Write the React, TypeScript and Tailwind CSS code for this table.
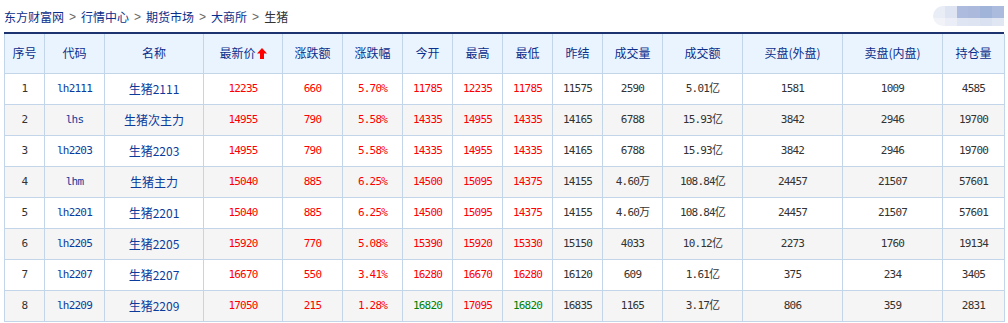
import { Fragment } from 'react';

type Row = [string, string, string, number, string, string, number, number, number, number, string, string, string, string, string];

const rows: Row[] = [
  ['1', 'lh2111', '生猪2111', 12235, '660', '5.70%', 11785, 12235, 11785, 11575, '2590', '5.01亿', '1581', '1009', '4585'],
  ['2', 'lhs', '生猪次主力', 14955, '790', '5.58%', 14335, 14955, 14335, 14165, '6788', '15.93亿', '3842', '2946', '19700'],
  ['3', 'lh2203', '生猪2203', 14955, '790', '5.58%', 14335, 14955, 14335, 14165, '6788', '15.93亿', '3842', '2946', '19700'],
  ['4', 'lhm', '生猪主力', 15040, '885', '6.25%', 14500, 15095, 14375, 14155, '4.60万', '108.84亿', '24457', '21507', '57601'],
  ['5', 'lh2201', '生猪2201', 15040, '885', '6.25%', 14500, 15095, 14375, 14155, '4.60万', '108.84亿', '24457', '21507', '57601'],
  ['6', 'lh2205', '生猪2205', 15920, '770', '5.08%', 15390, 15920, 15330, 15150, '4033', '10.12亿', '2273', '1760', '19134'],
  ['7', 'lh2207', '生猪2207', 16670, '550', '3.41%', 16280, 16670, 16280, 16120, '609', '1.61亿', '375', '234', '3405'],
  ['8', 'lh2209', '生猪2209', 17050, '215', '1.28%', 16820, 17095, 16820, 16835, '1165', '3.17亿', '806', '359', '2831'],
];

const headers = ['序号', '代码', '名称', '最新价', '涨跌额', '涨跌幅', '今开', '最高', '最低', '昨结', '成交量', '成交额', '买盘(外盘)', '卖盘(内盘)', '持仓量'];
const widths = ['w-[40px]', 'w-[60px]', 'w-[99px]', 'w-[79px]', 'w-[60px]', 'w-[60px]', 'w-[50px]', 'w-[50px]', 'w-[50px]', 'w-[50px]', 'w-[60px]', 'w-[80px]', 'w-[100px]', 'w-[100px]', 'w-[62px]'];

const crumbs = ['东方财富网', '行情中心', '期货市场', '大商所'];

const mono = "font-['DejaVu_Sans_Mono','Noto_Sans_CJK_SC',monospace] text-[11px] tracking-[-0.8px]";

function priceColor(v: number, prev: number) {
  if (v > prev) return 'text-[#ff0000]';
  if (v < prev) return 'text-[#008000]';
  return 'text-[#333333]';
}

function UpArrow() {
  return (
    <svg width="10" height="11" viewBox="0 0 10 11" className="inline-block ml-[1px] -mt-[2px] align-middle">
      <path d="M5 0 L10 5.5 L7 5.5 L7 11 L3 11 L3 5.5 L0 5.5 Z" fill="#ff0000" />
    </svg>
  );
}

function BlurBox() {
  const top = ['bg-[#e9edf6]', 'bg-[#dee4f2]', 'bg-[#acbbde]', 'bg-[#abbadc]', 'bg-[#a0b3d8]', 'bg-[#abbbdd]'];
  const bottom = ['bg-[#f1f3f9]', 'bg-[#ebeef7]', 'bg-[#dfe5f2]', 'bg-[#dee4f1]', 'bg-[#dae1f0]', 'bg-[#e0e6f2]'];
  return (
    <div className="w-[71px] h-[20px] rounded-l-[10px] overflow-hidden grid grid-cols-6 grid-rows-[12px_8px]">
      {top.map((c, i) => <div key={'t' + i} className={c} />)}
      {bottom.map((c, i) => <div key={'b' + i} className={c} />)}
    </div>
  );
}

export default function App() {
  return (
    <div className="w-[1008px] h-[323px] bg-white overflow-hidden font-['Noto_Sans_CJK_SC',sans-serif]">
      <div className="h-[32px] pl-[4px] pr-[4px] flex items-center justify-between">
        <div className="flex items-center text-[12px] leading-none pt-[2px]">
          {crumbs.map((c) => (
            <Fragment key={c}>
              <span className="text-[#0a2f8c]">{c}</span>
              <span className="text-[#666666] mx-[5px] font-['Liberation_Sans',sans-serif]">&gt;</span>
            </Fragment>
          ))}
          <span className="text-[#333333]">生猪</span>
        </div>
        <BlurBox />
      </div>
      <div className="mx-[4px] border-t-2 border-[#1c3370]">
        <table className="w-[1000px] table-fixed border-collapse">
          <thead>
            <tr className="bg-[#eaf4fe]">
              {headers.map((h, i) => (
                <th
                  key={h}
                  className={`${widths[i]} h-[39px] border border-t-0 border-[#c3d6e9] text-[12px] font-normal text-[#0b2f8c] text-center p-0`}
                >
                  {h}
                  {i === 3 && <UpArrow />}
                </th>
              ))}
            </tr>
          </thead>
          <tbody>
            {rows.map((r, ri) => {
              const prev = r[9];
              const cells = [
                { v: r[0], c: `${mono} text-[#333333]` },
                { v: r[1], c: `${mono} text-[#0b3c9c]` },
                { v: r[2], c: 'text-[12px] text-[#0b3c9c]' },
                { v: String(r[3]), c: `${mono} text-[#ff0000]` },
                { v: r[4], c: `${mono} text-[#ff0000]` },
                { v: r[5], c: `${mono} text-[#ff0000]` },
                { v: String(r[6]), c: `${mono} ${priceColor(r[6], prev)}` },
                { v: String(r[7]), c: `${mono} ${priceColor(r[7], prev)}` },
                { v: String(r[8]), c: `${mono} ${priceColor(r[8], prev)}` },
                { v: String(r[9]), c: `${mono} text-[#333333]` },
                { v: r[10], c: `${mono} text-[#333333]` },
                { v: r[11], c: `${mono} text-[#333333]` },
                { v: r[12], c: `${mono} text-[#333333]` },
                { v: r[13], c: `${mono} text-[#333333]` },
                { v: r[14], c: `${mono} text-[#333333]` },
              ];
              return (
                <tr key={ri} className={ri % 2 === 1 ? 'bg-[#f5f5f5]' : 'bg-white'}>
                  {cells.map((cell, ci) => (
                    <td key={ci} className={`h-[31px] p-0 border border-[#c3d6e9] text-center leading-none ${cell.c}`}>
                      {cell.v}
                    </td>
                  ))}
                </tr>
              );
            })}
          </tbody>
        </table>
      </div>
    </div>
  );
}
